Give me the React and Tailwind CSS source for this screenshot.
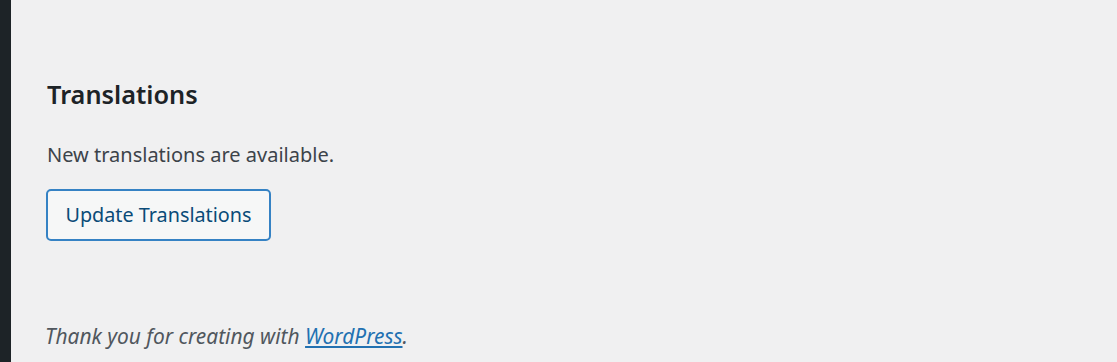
export default function App() {
  return (
    <div
      className="flex h-[362px] w-[1117px] overflow-hidden bg-[#f0f0f1] text-[#3c434a]"
      style={{ fontFamily: '"Noto Sans", "Open Sans", sans-serif' }}
    >
      {/* admin menu edge */}
      <div className="w-[11px] shrink-0 bg-[#1d2327]" />

      <div className="flex flex-1 flex-col pl-[36px]">
        <h2 className="mt-[76px] text-[25.3px] font-semibold leading-[36px] text-[#1d2327]">
          Translations
        </h2>
        <p className="mt-[29px] text-[20px] leading-[28px]">New translations are available.</p>
        <div className="mt-[20px] -ml-[1px]">
          <button className="h-[52px] w-[225px] rounded-[5px] border-2 border-[#3582c4] bg-[#f6f7f7] text-[19.8px] text-[#0a4b78]">
            Update Translations
          </button>
        </div>

        <p className="-ml-[2px] mt-auto mb-[12px] text-[20.9px] italic leading-[28px] text-[#50575e]">
          Thank you for creating with{' '}
          <a href="#" className="text-[#2271b1] underline">
            WordPress
          </a>
          .
        </p>
      </div>
    </div>
  );
}
